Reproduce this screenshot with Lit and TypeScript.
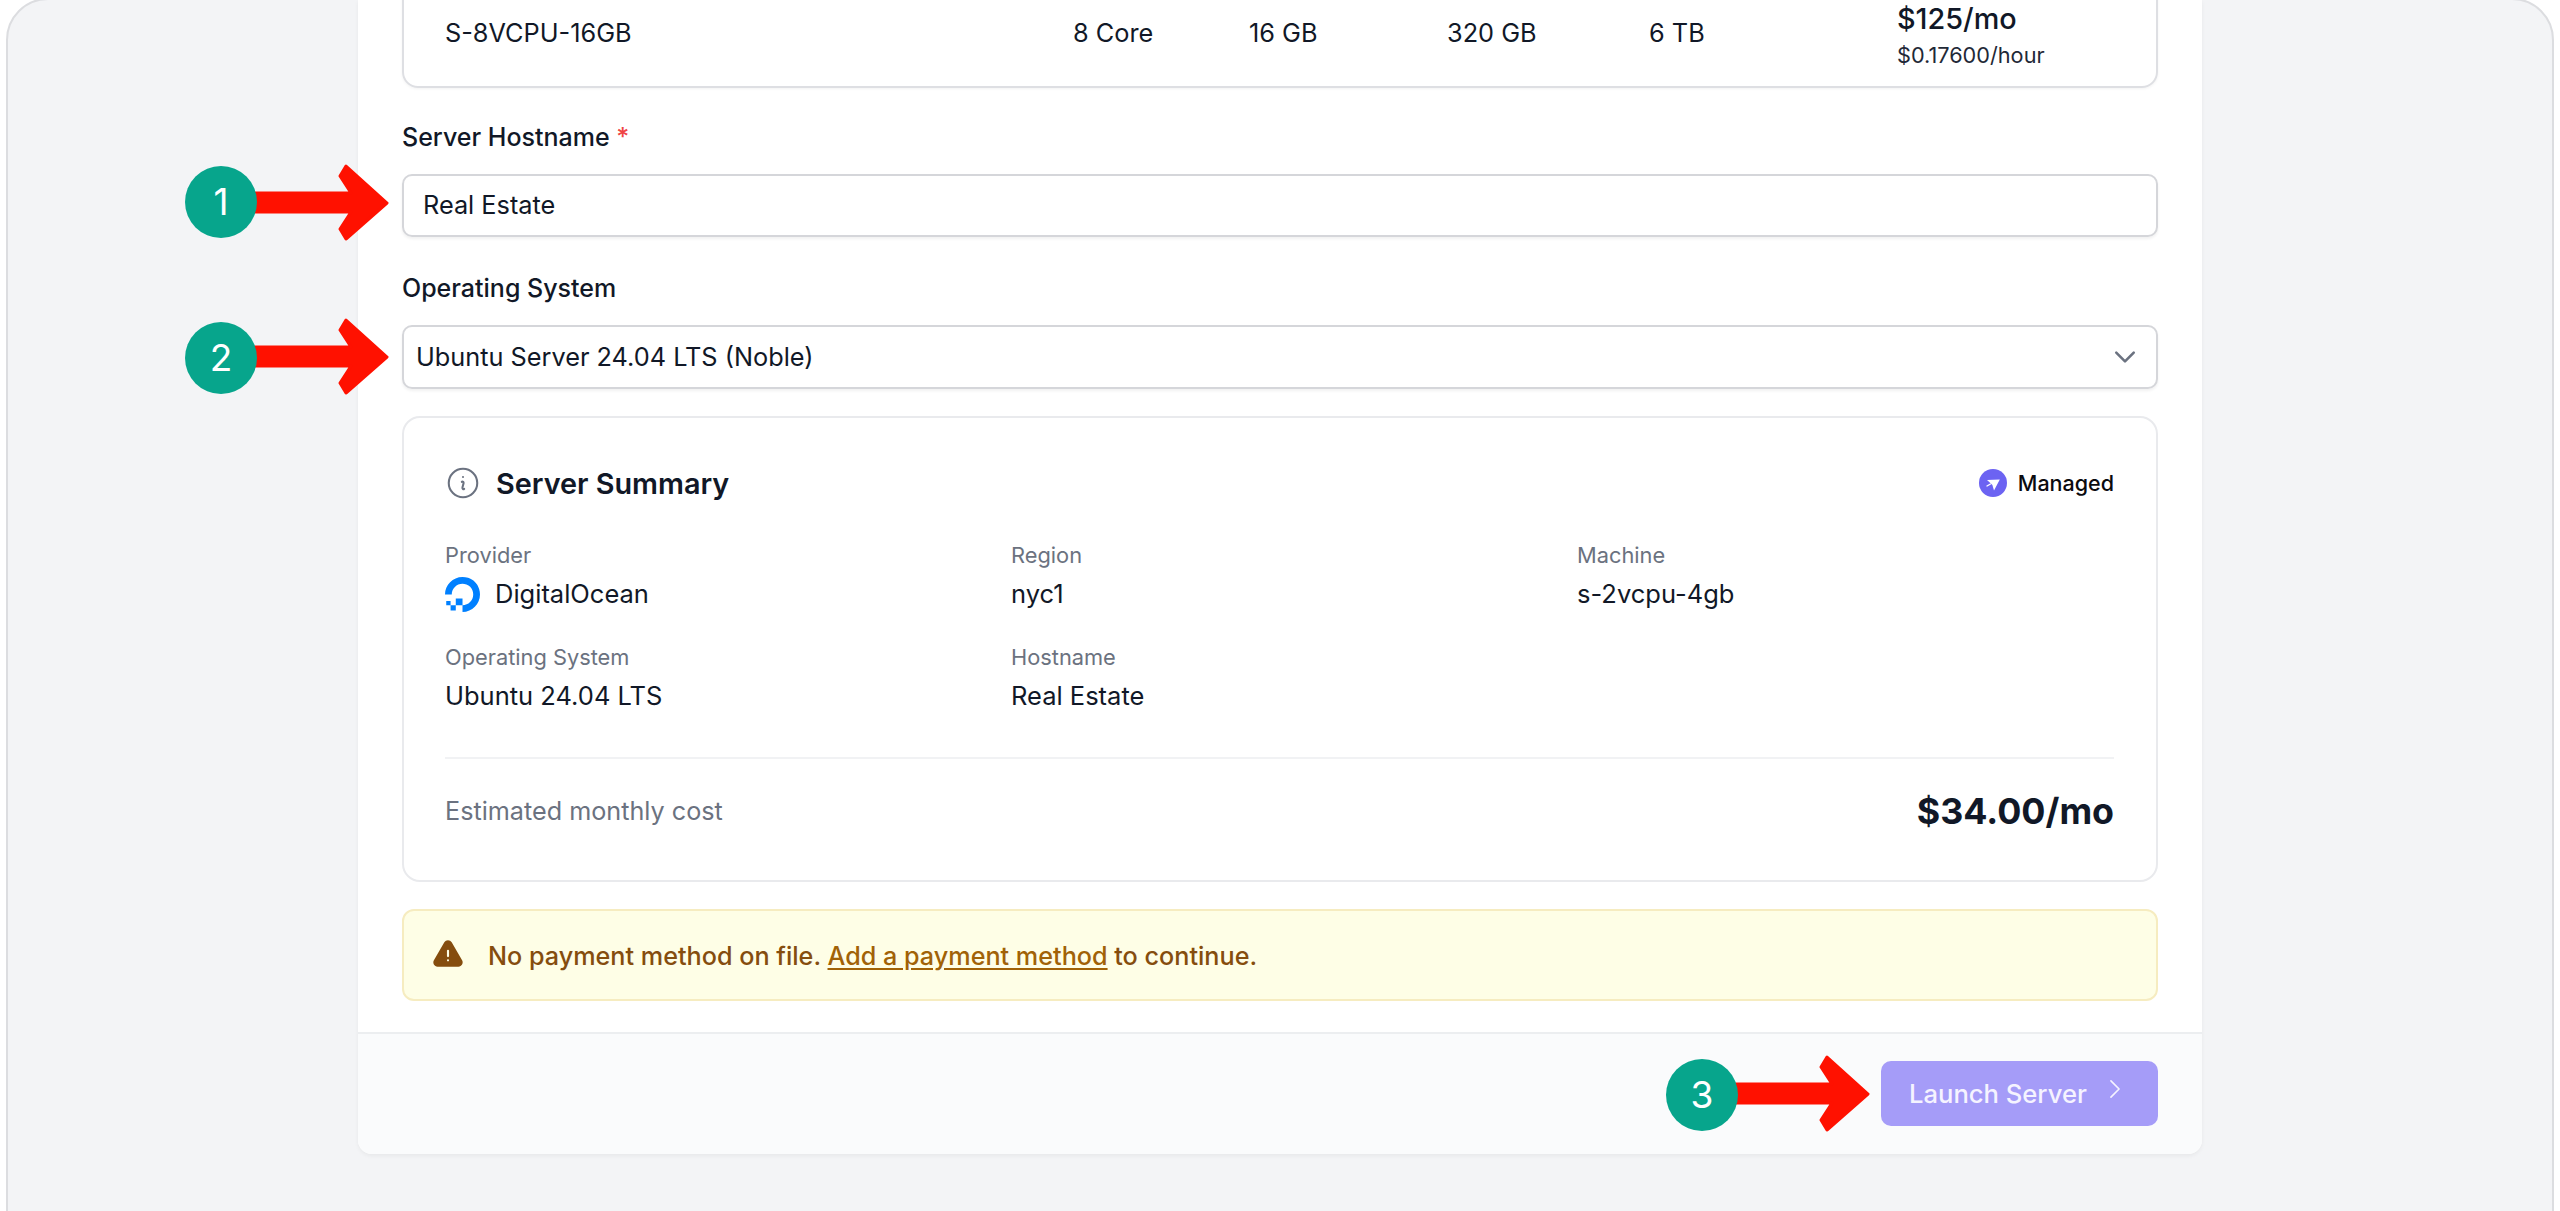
import { LitElement, html, css, svg } from "lit";
import { customElement } from "lit/decorators.js";

const ARROWS = [
  { n: "1", tipX: 389, y: 203, cx: 221, cy: 202 },
  { n: "2", tipX: 389, y: 357, cx: 221, cy: 358 },
  { n: "3", tipX: 1870, y: 1094, cx: 1702, cy: 1095 },
];

const SPECS = [
  { t: "S-8VCPU-16GB" },
  { t: "8 Core" },
  { t: "16 GB" },
  { t: "320 GB" },
  { t: "6 TB" },
];

@customElement("app-root")
export class AppRoot extends LitElement {
  static styles = css`
    :host {
      display: block;
      position: relative;
      width: 2560px;
      height: 1211px;
      overflow: hidden;
      background: #ffffff;
      font-family: Inter, "Liberation Sans", sans-serif;
      color: #111827;
    }
    .frame {
      box-sizing: border-box;
      width: 2548px;
      height: 1240px;
      margin: -2px 0 0 6px;
      background: #f3f4f6;
      border: 2px solid #dcdde0;
      border-radius: 42px 42px 0 0;
      display: flex;
      justify-content: center;
      overflow: hidden;
    }
    .panel {
      box-sizing: border-box;
      width: 1844px;
      height: 1154px;
      background: #ffffff;
      border-radius: 0 0 14px 14px;
      box-shadow: 0 2px 4px rgba(0, 0, 0, 0.05);
      display: flex;
      flex-direction: column;
    }
    .body {
      flex: 1;
      padding: 0 44px;
      display: flex;
      flex-direction: column;
      min-height: 0;
    }
    .body > * {
      flex: none;
    }
    .plan {
      box-sizing: border-box;
      height: 180px;
      margin-top: -92px;
      border: 2px solid #dedfe3;
      border-radius: 16px;
      box-shadow: 0 1px 3px rgba(0, 0, 0, 0.05);
      padding: 108px 0 0 41px;
      display: grid;
      grid-template-columns: 628px 176px 198px 202px 248px auto;
      font-size: 25.3px;
      line-height: 30px;
      color: #111827;
    }
    .price {
      margin-top: -17px;
    }
    .price b {
      display: block;
      font-size: 28.8px;
      font-weight: 500;
      line-height: 36px;
    }
    .price span {
      display: block;
      font-size: 21.7px;
      line-height: 36px;
      color: #1f2937;
    }
    .label {
      font-size: 25px;
      font-weight: 500;
      line-height: 32px;
      color: #111827;
      margin-bottom: 21px;
    }
    .label.first {
      margin-top: 33px;
    }
    .label.second {
      margin-top: 35px;
      margin-bottom: 21px;
    }
    .label em {
      font-style: normal;
      color: #ef4444;
    }
    .field {
      box-sizing: border-box;
      height: 63px;
      border: 2px solid #d5d6da;
      border-radius: 10px;
      box-shadow: 0 2px 3px rgba(0, 0, 0, 0.06);
      display: flex;
      align-items: center;
      font-size: 25.3px;
      color: #111827;
    }
    .field span.val {
      margin-top: -2px;
    }
    .field.input {
      padding-left: 19px;
    }
    .field.select {
      padding: 0 20px 0 12px;
      justify-content: space-between;
      height: 64px;
    }
    .field.select svg {
      width: 28px;
      height: 28px;
      color: #6b7280;
      margin-right: -3px;
    }
    .summary {
      box-sizing: border-box;
      height: 466px;
      margin-top: 27px;
      border: 2px solid #e9eaed;
      border-radius: 18px;
      padding: 43px 42px 0 41px;
    }
    .sum-head {
      display: flex;
      align-items: center;
      height: 44px;
    }
    .sum-head svg.info {
      width: 38px;
      height: 38px;
      color: #6b7280;
      margin-left: -1px;
      margin-right: 14px;
    }
    .sum-head h3 {
      flex: 1;
      margin: 0;
      font-size: 28.8px;
      font-weight: 600;
      color: #111827;
    }
    .managed {
      display: flex;
      align-items: center;
      gap: 11px;
      font-size: 21.5px;
      font-weight: 500;
      color: #0b0b0f;
    }
    .managed svg {
      width: 28px;
      height: 28px;
    }
    .grid {
      display: grid;
      grid-template-columns: 566px 566px 1fr;
      row-gap: 30px;
      margin-top: 36px;
    }
    .cell small {
      display: block;
      font-size: 21.8px;
      line-height: 28px;
      color: #6b7280;
    }
    .cell div {
      display: flex;
      align-items: center;
      gap: 15px;
      font-size: 25.5px;
      line-height: 36px;
      min-height: 38px;
      margin-top: 6px;
      color: #111827;
    }
    .cell div svg {
      width: 35px;
      height: 35px;
    }
    .cost {
      margin-top: 42px;
      border-top: 2px solid #f1f2f4;
      padding-top: 30px;
      display: flex;
      justify-content: space-between;
      align-items: center;
    }
    .cost span {
      font-size: 25.2px;
      color: #6b7280;
    }
    .cost strong {
      font-size: 35.8px;
      font-weight: 700;
      color: #111827;
    }
    .alert {
      box-sizing: border-box;
      height: 92px;
      margin-top: 27px;
      border: 2px solid #f6ecc0;
      border-radius: 12px;
      background: #fefee6;
      padding-left: 27px;
      display: flex;
      align-items: center;
      gap: 23px;
      font-size: 25.2px;
      font-weight: 500;
      color: #854d0e;
    }
    .alert svg {
      width: 34px;
      height: 34px;
      flex: none;
    }
    .alert span {
      margin-top: 1px;
    }
    .alert a {
      color: #a16207;
      text-decoration: underline;
      text-underline-offset: 3px;
    }
    .foot {
      box-sizing: border-box;
      height: 122px;
      flex: none;
      background: #fafbfc;
      border-top: 2px solid #eceef0;
      border-radius: 0 0 14px 14px;
      padding: 27px 44px 0;
      display: flex;
      justify-content: flex-end;
      align-items: flex-start;
    }
    .btn {
      box-sizing: border-box;
      width: 277px;
      height: 65px;
      border: none;
      border-radius: 10px;
      background: #a59cf8;
      color: #f5f3ff;
      font: 500 25.6px Inter, "Liberation Sans", sans-serif;
      padding: 0 0 0 28px;
      display: flex;
      align-items: center;
      gap: 15px;
    }
    .btn svg {
      width: 26px;
      height: 26px;
      margin-top: -10px;
    }
    .marks {
      position: absolute;
      inset: 0;
      width: 2560px;
      height: 1211px;
      pointer-events: none;
    }
    .marks text {
      font: 400 37px Inter, "Liberation Sans", sans-serif;
      fill: #ffffff;
      text-anchor: middle;
    }
  `;

  private arrow(a: { n: string; tipX: number; y: number; cx: number; cy: number }) {
    const p = (dx: number, dy: number) => `${a.tipX + dx},${a.y + dy}`;
    const pts = [
      p(-2, 0), p(-43, -37), p(-49, -27), p(-38, -10), p(-150, -10),
      p(-150, 9), p(-38, 9), p(-49, 26), p(-43, 36),
    ].join(" ");
    return svg`
      <polygon points=${pts} fill="#ff1100" stroke="#ff1100" stroke-width="3" stroke-linejoin="round"></polygon>
      <circle cx=${a.cx} cy=${a.cy} r="36" fill="#07a58c"></circle>
      <text x=${a.cx} y=${a.cy + 13}>${a.n}</text>
    `;
  }

  render() {
    return html`
      <div class="frame">
        <div class="panel">
          <div class="body">
            <div class="plan">
              ${SPECS.map((s) => html`<div>${s.t}</div>`)}
              <div class="price"><b>$125/mo</b><span>$0.17600/hour</span></div>
            </div>

            <div class="label first">Server Hostname <em>*</em></div>
            <div class="field input"><span class="val">Real Estate</span></div>

            <div class="label second">Operating System</div>
            <div class="field select">
              <span class="val">Ubuntu Server 24.04 LTS (Noble)</span>
              <svg viewBox="0 0 24 24" fill="none" stroke="currentColor" stroke-width="2.2" stroke-linecap="round" stroke-linejoin="round">
                <path d="m19.5 8.25-7.5 7.5-7.5-7.5" />
              </svg>
            </div>

            <section class="summary">
              <div class="sum-head">
                <svg class="info" viewBox="0 0 24 24" fill="none" stroke="currentColor" stroke-width="1.3" stroke-linecap="round" stroke-linejoin="round">
                  <path d="m11.25 11.25.041-.02a.75.75 0 0 1 1.063.852l-.708 2.836a.75.75 0 0 0 1.063.853l.041-.021M21 12a9 9 0 1 1-18 0 9 9 0 0 1 18 0Zm-9-3.75h.008v.008H12V8.25Z" />
                </svg>
                <h3>Server Summary</h3>
                <div class="managed">
                  <svg viewBox="0 0 28 28">
                    <circle cx="14" cy="14" r="14" fill="#6c63f2"></circle>
                    <path d="M8 11l12.8-.6L15 21.5l-1.6-5.6-1.8-1.6z" fill="#ffffff"></path>
                    <path d="M8 17l3.5-2" stroke="#ffffff" stroke-width="1.4" stroke-linecap="round"></path>
                  </svg>
                  Managed
                </div>
              </div>

              <div class="grid">
                <div class="cell">
                  <small>Provider</small>
                  <div>
                    <svg viewBox="0 0 24 24" fill="#0080ff">
                      <path d="M12.04 0C5.408-.02.005 5.37.005 11.992h4.638c0-4.923 4.882-8.731 10.064-6.855a6.95 6.95 0 014.147 4.148c1.889 5.177-1.924 10.055-6.84 10.064v-4.61H7.391v4.623h4.61V24c7.86 0 13.967-7.588 11.397-15.83-1.115-3.59-3.985-6.446-7.575-7.575A12.8 12.8 0 0012.039 0zM7.39 19.362H3.828v3.564H7.39zm-3.563 0v-2.978H.85v2.978z" />
                    </svg>
                    DigitalOcean
                  </div>
                </div>
                <div class="cell"><small>Region</small><div>nyc1</div></div>
                <div class="cell"><small>Machine</small><div>s-2vcpu-4gb</div></div>
                <div class="cell"><small>Operating System</small><div>Ubuntu 24.04 LTS</div></div>
                <div class="cell"><small>Hostname</small><div>Real Estate</div></div>
              </div>

              <div class="cost">
                <span>Estimated monthly cost</span>
                <strong>$34.00/mo</strong>
              </div>
            </section>

            <div class="alert">
              <svg viewBox="0 0 24 24" fill="#854d0e">
                <path fill-rule="evenodd" clip-rule="evenodd" d="M9.401 3.003c1.155-2 4.043-2 5.197 0l7.355 12.748c1.154 2-.29 4.5-2.599 4.5H4.645c-2.309 0-3.752-2.5-2.598-4.5L9.4 3.003ZM12 8.25a.75.75 0 0 1 .75.75v3.75a.75.75 0 0 1-1.5 0V9A.75.75 0 0 1 12 8.25Zm0 8.25a.75.75 0 1 0 0-1.5.75.75 0 0 0 0 1.5Z" />
              </svg>
              <span>No payment method on file. <a>Add a payment method</a> to continue.</span>
            </div>
          </div>

          <div class="foot">
            <button class="btn">
              Launch Server
              <svg viewBox="0 0 24 24" fill="none" stroke="currentColor" stroke-width="1.5" stroke-linecap="round" stroke-linejoin="round">
                <path d="m8.25 4.5 7.5 7.5-7.5 7.5" />
              </svg>
            </button>
          </div>
        </div>
      </div>

      <svg class="marks" viewBox="0 0 2560 1211">
        ${ARROWS.map((a) => this.arrow(a))}
      </svg>
    `;
  }
}
